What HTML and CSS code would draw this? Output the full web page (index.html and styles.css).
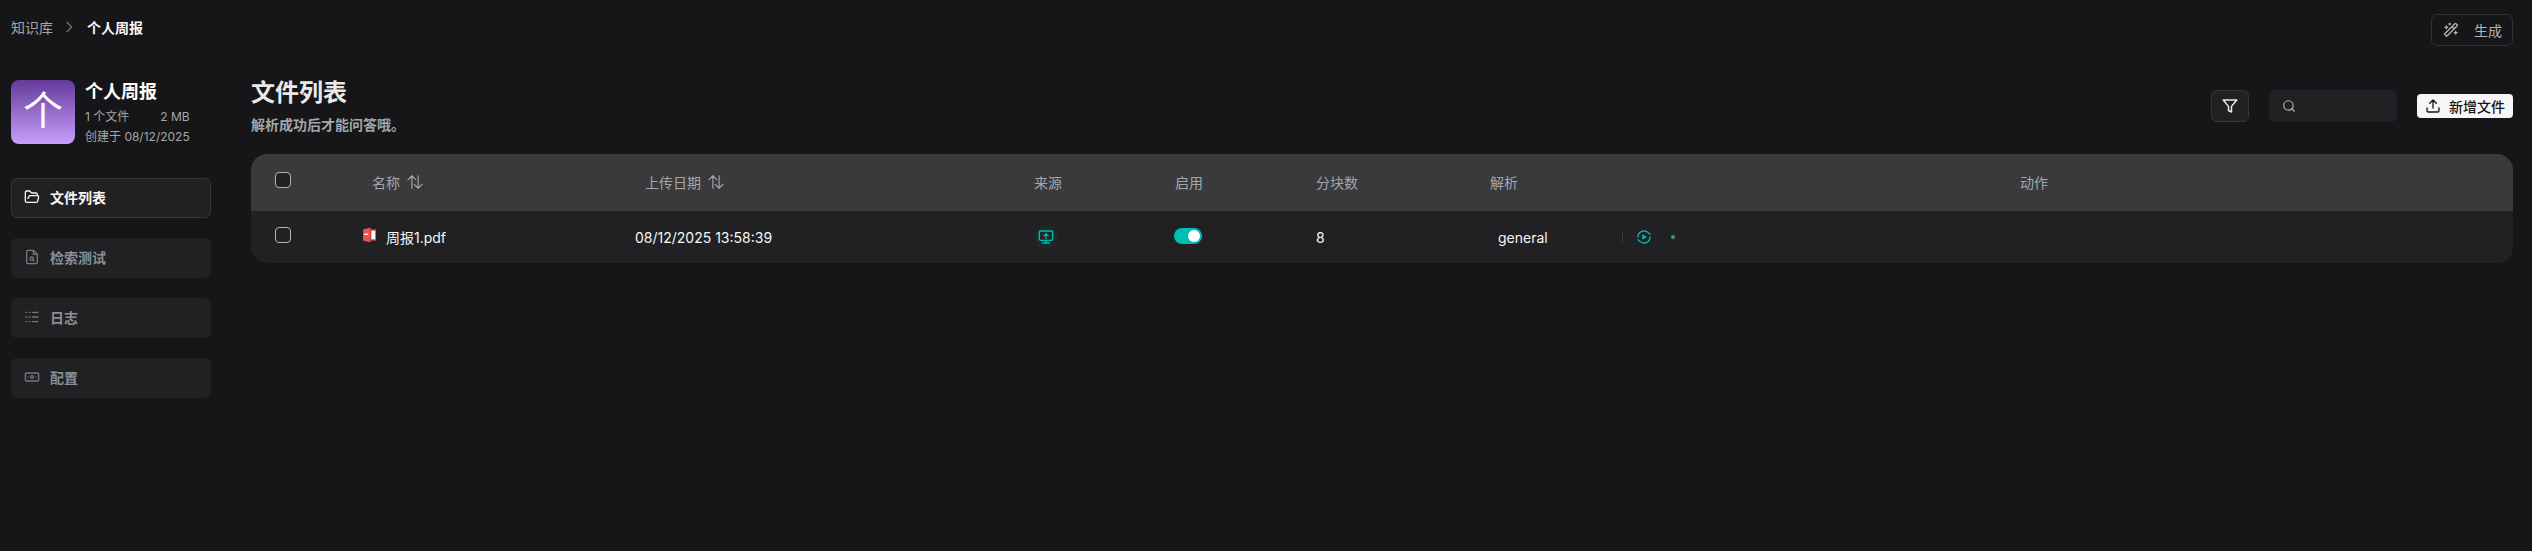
FILE: index.html
```html
<!DOCTYPE html>
<html lang="zh">
<head>
<meta charset="utf-8">
<title>文件列表</title>
<link rel="stylesheet" href="styles.css">
</head>
<body>
<header class="topbar">
  <nav class="crumbs"><span class="crumb">知识库</span>
    <svg class="crumb-sep" viewBox="0 0 24 24"><path d="m9 5 7 7-7 7"/></svg>
    <span class="crumb-current">个人周报</span></nav>
  <button class="gen-btn">
    <svg class="ico-16" viewBox="0 0 24 24"><path d="m21 4-1.500-1.500a1.200 1.200 0 0 0-1.700 0L3 17.300a1.200 1.200 0 0 0 0 1.700L4.700 20.700a1.200 1.200 0 0 0 1.700 0L21 6a1.200 1.200 0 0 0 0-2Z"/><path d="m14 7 3 3"/><path d="M5 6v4M19 14v4M10 2v2M7 8H3M21 16h-4M11 3H9"/></svg>
    <span>生成</span></button>
</header>
<div class="layout">
  <aside class="side">
    <div class="kb">
      <div class="avatar">个</div>
      <div class="kb-info">
        <div class="kb-name">个人周报</div>
        <div class="kb-meta kb-stats"><span>1 个文件</span><span>2 MB</span></div>
        <div class="kb-meta">创建于 08/12/2025</div>
      </div>
    </div>
    <ul class="menu">
      <li class="menu-item active"><svg class="ico-16" viewBox="0 0 24 24"><path d="m6 14 1.500-2.900A2 2 0 0 1 9.200 10H20a2 2 0 0 1 1.900 2.500l-1.500 6A2 2 0 0 1 18.500 20H4a2 2 0 0 1-2-2V5a2 2 0 0 1 2-2h3.900a2 2 0 0 1 1.700.9l.8 1.200a2 2 0 0 0 1.700.9H18a2 2 0 0 1 2 2v2"/></svg><span>文件列表</span></li>
      <li class="menu-item"><svg class="ico-16" viewBox="0 0 24 24"><path d="M14 2H6a2 2 0 0 0-2 2v16a2 2 0 0 0 2 2h12a2 2 0 0 0 2-2V8z"/><path d="M14 2v6h6"/><circle cx="11.500" cy="14.500" r="2.500"/><path d="M13.300 16.300 15 18"/></svg><span>检索测试</span></li>
      <li class="menu-item"><svg class="ico-16" viewBox="0 0 24 24"><path d="M3 5h1M3 12h1M3 19h1M8 5h1M8 12h1M8 19h1M13 5h8M13 12h8M13 19h8"/></svg><span>日志</span></li>
      <li class="menu-item"><svg class="ico-16" viewBox="0 0 24 24"><rect x="2" y="6" width="20" height="12" rx="2"/><circle cx="12" cy="12" r="2"/><path d="M6 12h.01M18 12h.01"/></svg><span>配置</span></li>
    </ul>
  </aside>
  <main class="main">
    <div class="head">
      <div>
        <h1 class="title">文件列表</h1>
        <p class="subtitle">解析成功后才能问答哦。</p>
      </div>
      <div class="tools">
        <button class="filter-btn"><svg class="ico-18" viewBox="0 0 24 24"><path d="M3 4h18l-7 8.500V20l-4-2v-5.500z"/></svg></button>
        <div class="search"><svg class="ico-14" viewBox="0 0 24 24"><circle cx="11" cy="11" r="8"/><path d="m21 21-4.300-4.300"/></svg></div>
        <button class="add-btn"><svg class="ico-16" viewBox="0 0 24 24"><path d="M21 15v4a2 2 0 0 1-2 2H5a2 2 0 0 1-2-2v-4M17 8l-5-5-5 5M12 3v12"/></svg><span>新增文件</span></button>
      </div>
    </div>
    <section class="table">
      <div class="tr th">
        <div class="c-check"><span class="checkbox"></span></div>
        <div class="c-name">名称<svg class="sort" viewBox="2 3 20 18"><path d="M8 20V4M3 9l5-5 5 5M16 4v16M11 15l5 5 5-5"/></svg></div>
        <div class="c-date">上传日期<svg class="sort" viewBox="2 3 20 18"><path d="M8 20V4M3 9l5-5 5 5M16 4v16M11 15l5 5 5-5"/></svg></div>
        <div class="c-src">来源</div>
        <div class="c-on">启用</div>
        <div class="c-chunk">分块数</div>
        <div class="c-parse">解析</div>
        <div class="c-act">动作</div>
      </div>
      <div class="tr td">
        <div class="c-check"><span class="checkbox"></span></div>
        <div class="c-name-cell">
          <svg class="pdf" viewBox="0 0 14 16"><path class="pdf-door" d="M0 2 8 0v16l-8-2z"/><rect class="pdf-door" x="8" y="2" width="6" height="12"/><rect class="pdf-page" x="9" y="3.500" width="4" height="9"/><rect class="pdf-page" x="1.500" y="6.500" width="4" height="1.500"/></svg>
          <span>周报1.pdf</span></div>
        <div class="c-date-cell">08/12/2025 13:58:39</div>
        <div class="c-src"><span class="src-badge"><svg class="ico-16" viewBox="0 0 24 24"><rect x="2" y="3" width="20" height="14" rx="2"/><path d="M12 21v-4M7 21h10M12 14V7M9 10l3-3 3 3"/></svg></span></div>
        <div class="c-on"><span class="switch"><span class="knob"></span></span></div>
        <div class="c-chunk">8</div>
        <div class="c-parse-cell"><span>general</span></div>
        <div class="c-act-cell">
          <span class="divider"></span>
          <svg class="ico-16 play" viewBox="0 0 24 24"><path d="M21 12a9 9 0 0 1-15.500 6.200L3 16M3 12a9 9 0 0 1 15.500-6.200L21 8"/><path class="fill" d="m9.500 8 7 4-7 4z"/></svg>
          <span class="dot"></span>
        </div>
      </div>
    </section>
  </main>
</div>
</body>
</html>
```
FILE: styles.css
```css
* { box-sizing: border-box; }
html, body { margin: 0; padding: 0; }
body {
  height: 551px;
  overflow: hidden;
  background: #161618;
  color: #f6f6f7;
  font-family: Inter, "Noto Sans CJK SC", sans-serif;
  font-size: 14px;
}
svg { fill: none; stroke: currentColor; stroke-width: 2; stroke-linecap: round; stroke-linejoin: round; flex: none; display: block; }
.ico-18 { width: 18px; height: 18px; }
.ico-16 { width: 16px; height: 16px; }
.ico-14 { width: 14px; height: 14px; }
button { font: inherit; cursor: pointer; }

.topbar { height: 80px; padding: 14px 19px 0 11px; display: flex; justify-content: space-between; align-items: flex-start; }
.crumbs { display: flex; align-items: center; height: 26px; font-size: 14px; }
.crumb { color: #a4a6ab; }
.crumb-sep { width: 16px; height: 16px; margin: 0 10px 0 8px; color: #6b6e75; stroke-width: 2; }
.crumb-current { font-weight: 600; color: #f6f6f7; }
.gen-btn { width: 82px; height: 32px; display: flex; align-items: center; justify-content: space-between; padding: 0 10px 0 11px; background: transparent; border: 1px solid #2f3033; border-radius: 6px; color: #b2b5b7; }

.layout { display: flex; align-items: flex-start; }
.side { width: 200px; margin-left: 11px; flex: none; }
.kb { display: flex; gap: 10px; height: 64px; }
.avatar { width: 64px; height: 64px; border-radius: 8px; background: linear-gradient(180deg, #653a9a, #c79ffc); color: #fff; font-size: 40px; line-height: 62px; text-align: center; }
.kb-info { flex: 1; }
.kb-name { font-size: 18px; line-height: 24px; font-weight: 700; color: #fff; margin-bottom: 3px; }
.kb-meta { font-size: 12px; line-height: 20px; color: #a4a6ab; }
.kb-stats { display: flex; gap: 31px; }
.menu { list-style: none; margin: 34px 0 0; padding: 0; display: flex; flex-direction: column; gap: 20px; }
.menu-item { height: 40px; display: flex; align-items: center; gap: 10px; padding: 0 12px 2px; background: #212123; border-radius: 6px; border: 1px solid #212123; color: #75787f; font-weight: 600; }
.menu-item span { color: #8a8e96; }
.menu-item.active { border-color: #36363a; color: #f6f6f7; }
.menu-item.active span { color: #f6f6f7; }

.main { flex: 1; margin: 0 19px 0 40px; min-width: 0; }
.head { display: flex; justify-content: space-between; height: 74px; }
.title { margin: -3px 0 0; font-size: 24px; line-height: 32px; font-weight: 600; color: #e9e9ea; }
.subtitle { margin: 6px 0 0; font-size: 14px; line-height: 20px; font-weight: 600; color: #a4a6ab; }
.tools { display: flex; align-items: center; gap: 20px; height: 32px; margin-top: 10px; }
.filter-btn { width: 38px; height: 32px; background: #212123; border: 1px solid #36363a; border-radius: 6px; color: #e9e9ea; display: flex; align-items: center; justify-content: center; padding: 0; }
.search { width: 128px; height: 32px; background: #212123; border: 1px solid #1b2230; border-radius: 6px; display: flex; align-items: center; padding-left: 12px; color: #b2b5b7; }
.add-btn { width: 96px; height: 24px; background: #f6f6f7; border: 0; border-radius: 4px; color: #161618; display: flex; align-items: center; justify-content: center; gap: 8px; padding: 0; font-weight: 500; white-space: nowrap; }

.table { border-radius: 16px; overflow: hidden; background: #212123; }
.tr { display: grid; grid-template-columns: 111px 273px 399px 141px 141px 174px 530px 1fr; align-items: center; }
.th { height: 57px; padding-bottom: 2px; background: #3a3a3d; color: #a4a6ab; font-size: 14px; }
.td { height: 52px; background: #212123; color: #f6f6f7; }
.c-check { padding-left: 24px; display: flex; }
.th .c-check { margin-top: -3px; }
.td .c-check { margin-top: -4px; }
.checkbox { width: 16px; height: 16px; border: 1px solid #b2b5b7; border-radius: 4px; background: #212123; }
.c-name { padding-left: 10px; display: flex; align-items: center; }
.c-date { padding-left: 10px; display: flex; align-items: center; }
.sort { width: 16px; height: 14px; margin-left: 7px; stroke-width: 1.500; }
.c-name-cell { display: flex; align-items: center; gap: 10px; padding-left: 1px; }
.pdf { width: 13px; height: 16px; margin-top: -4px; stroke: none; }
.pdf-door { fill: #ef4f4f; }
.pdf-page { fill: #fff; }
.src-badge { display: flex; width: 24px; height: 24px; align-items: center; justify-content: center; border-radius: 50%; background: #1c2a2a; color: #00beb4; }
.switch { display: block; width: 28px; height: 16px; border-radius: 8px; background: #00beb4; position: relative; margin: -2px 0 0 -1px; }
.knob { position: absolute; right: 2px; top: 2px; width: 12px; height: 12px; border-radius: 50%; background: #fff; }
.c-parse-cell { padding-left: 8px; display: flex; align-items: center; }
.c-act-cell { display: flex; align-items: center; margin-left: -398px; }
.divider { width: 1px; height: 10px; background: #3a3a3d; }
.play { margin-left: 13px; color: #00beb4; }
.play .fill { fill: #00beb4; stroke: none; }
.dot { width: 4px; height: 4px; margin-left: 19px; border-radius: 50%; background: #3ba05c; }
```
